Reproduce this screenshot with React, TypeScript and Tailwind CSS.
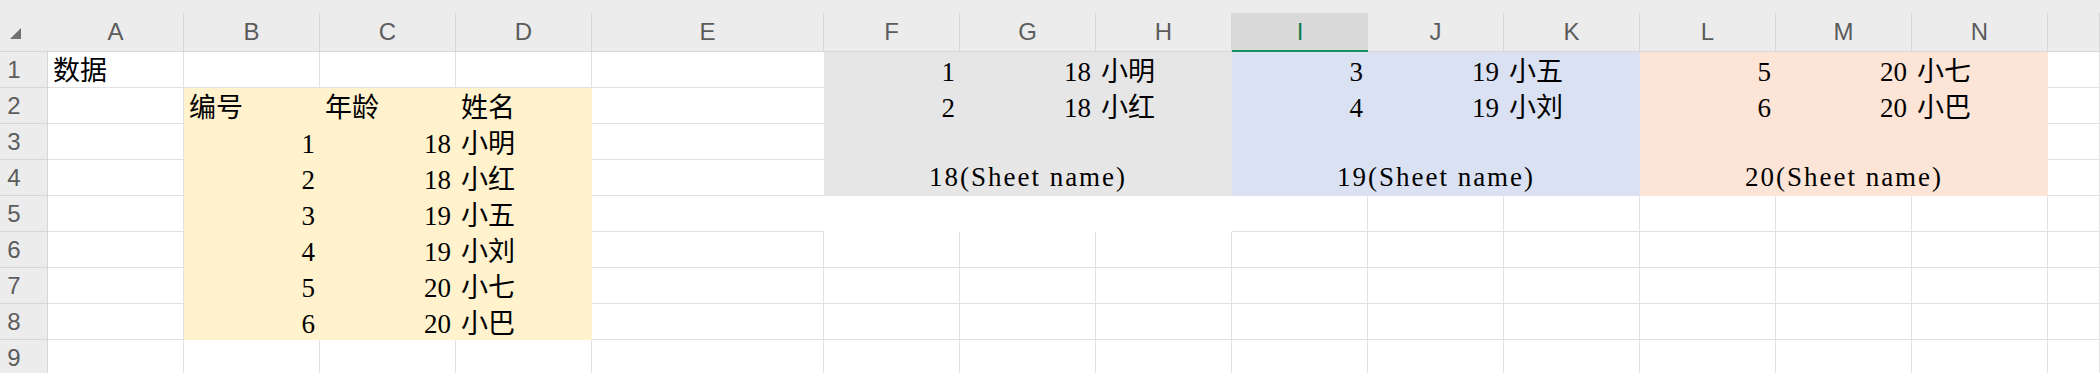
const Y = "bg-[#fff2cc]";
const G = "bg-[#e7e6e6]";
const B = "bg-[#d9e1f2]";
const O = "bg-[#fce4d6]";

const s1 = "w-[136px]";
const s3 = "w-[408px]";
const wE = "w-[232px]";
const rest = "flex-1";

type C = { w: string; t?: string; a?: "l" | "r" | "c"; bg?: string; noR?: boolean };

const letters = ["A", "B", "C", "D", "E", "F", "G", "H", "I", "J", "K", "L", "M", "N", ""];

function Cell({ w, t, a = "l", bg, noR }: C) {
  const edge = bg
    ? bg
    : noR
      ? "bg-white border-b border-[#e1e1e1]"
      : "bg-white border-r border-b border-[#e1e1e1]";
  const justify = a === "r" ? "justify-end" : a === "c" ? "justify-center" : "justify-start";
  const sheet = t && t.includes("Sheet");
  return (
    <div className={`${w} h-full shrink-0 flex items-end ${justify} px-[5px] pb-[2px] ${edge}`}>
      {t && (
        <span
          className={`leading-none text-[27px] text-black whitespace-pre font-['Liberation_Serif','Noto_Sans_CJK_SC',serif] ${
            sheet ? "tracking-[2px] pb-[3px]" : ""
          }`}
        >
          {t}
        </span>
      )}
    </div>
  );
}

const empty9 = (): C[] => Array.from({ length: 9 }, () => ({ w: s1 }));

function yellow(n: string, age: string, name: string): C[] {
  return [
    { w: s1 },
    { w: s1, t: n, a: "r", bg: Y },
    { w: s1, t: age, a: "r", bg: Y },
    { w: s1, t: name, bg: Y },
  ];
}

const rows: C[][] = [
  [
    { w: s1, t: "数据" },
    { w: s1 },
    { w: s1 },
    { w: s1 },
    { w: wE, noR: true },
    { w: s1, t: "1", a: "r", bg: G },
    { w: s1, t: "18", a: "r", bg: G },
    { w: s1, t: "小明", bg: G },
    { w: s1, t: "3", a: "r", bg: B },
    { w: s1, t: "19", a: "r", bg: B },
    { w: s1, t: "小五", bg: B },
    { w: s1, t: "5", a: "r", bg: O },
    { w: s1, t: "20", a: "r", bg: O },
    { w: s1, t: "小七", bg: O },
    { w: rest },
  ],
  [
    { w: s1 },
    { w: s1, t: "编号", bg: Y },
    { w: s1, t: "年龄", bg: Y },
    { w: s1, t: "姓名", bg: Y },
    { w: wE, noR: true },
    { w: s1, t: "2", a: "r", bg: G },
    { w: s1, t: "18", a: "r", bg: G },
    { w: s1, t: "小红", bg: G },
    { w: s1, t: "4", a: "r", bg: B },
    { w: s1, t: "19", a: "r", bg: B },
    { w: s1, t: "小刘", bg: B },
    { w: s1, t: "6", a: "r", bg: O },
    { w: s1, t: "20", a: "r", bg: O },
    { w: s1, t: "小巴", bg: O },
    { w: rest },
  ],
  [
    ...yellow("1", "18", "小明"),
    { w: wE, noR: true },
    { w: s3, bg: G },
    { w: s3, bg: B },
    { w: s3, bg: O },
    { w: rest },
  ],
  [
    ...yellow("2", "18", "小红"),
    { w: wE, noR: true },
    { w: s3, bg: G, t: "18(Sheet name)", a: "c" },
    { w: s3, bg: B, t: "19(Sheet name)", a: "c" },
    { w: s3, bg: O, t: "20(Sheet name)", a: "c" },
    { w: rest },
  ],
  [
    ...yellow("3", "19", "小五"),
    { w: wE, noR: true },
    { w: s3, bg: "bg-white" },
    ...empty9().slice(0, 6),
    { w: rest },
  ],
  [...yellow("4", "19", "小刘"), { w: wE }, ...empty9(), { w: rest }],
  [...yellow("5", "20", "小七"), { w: wE }, ...empty9(), { w: rest }],
  [...yellow("6", "20", "小巴"), { w: wE }, ...empty9(), { w: rest }],
  [{ w: s1 }, { w: s1 }, { w: s1 }, { w: s1 }, { w: wE }, ...empty9(), { w: rest }],
];

function ColHeader({ k }: { k: string }) {
  const w = k === "E" ? wE : k === "" ? rest : s1;
  const sel = k === "I";
  return (
    <div
      className={`${w} h-full shrink-0 flex items-center justify-center text-[24px] font-['Liberation_Sans',sans-serif] ${
        sel
          ? "bg-[#dadada] text-[#137a4c] border-b-2 border-[#149160]"
          : "text-[#5c5c5c] border-r border-b border-[#d6d6d6]"
      }`}
    >
      {k}
    </div>
  );
}

export default function App() {
  return (
    <div className="w-[2100px] h-[373px] overflow-hidden bg-white">
      <div className="h-[13px] bg-[#ececec]" />
      <div className="flex h-[39px] bg-[#ececec]">
        <div className="w-[48px] h-full shrink-0 border-b border-[#d6d6d6] pl-[10px] pt-[15px]">
          <svg width="11" height="11" viewBox="0 0 11 11">
            <polygon points="11,0 11,11 0,11" fill="#707070" />
          </svg>
        </div>
        {letters.map((k, i) => (
          <ColHeader key={i} k={k} />
        ))}
      </div>
      {rows.map((r, i) => (
        <div key={i} className="flex h-[36px]">
          <div className="w-[48px] h-full shrink-0 bg-[#ececec] border-r border-b border-[#d6d6d6] flex items-center">
            <span className="w-[28px] text-center text-[24px] leading-none text-[#5c5c5c] font-['Liberation_Sans',sans-serif]">
              {i + 1}
            </span>
          </div>
          {r.map((c, j) => (
            <Cell key={j} {...c} />
          ))}
        </div>
      ))}
    </div>
  );
}
